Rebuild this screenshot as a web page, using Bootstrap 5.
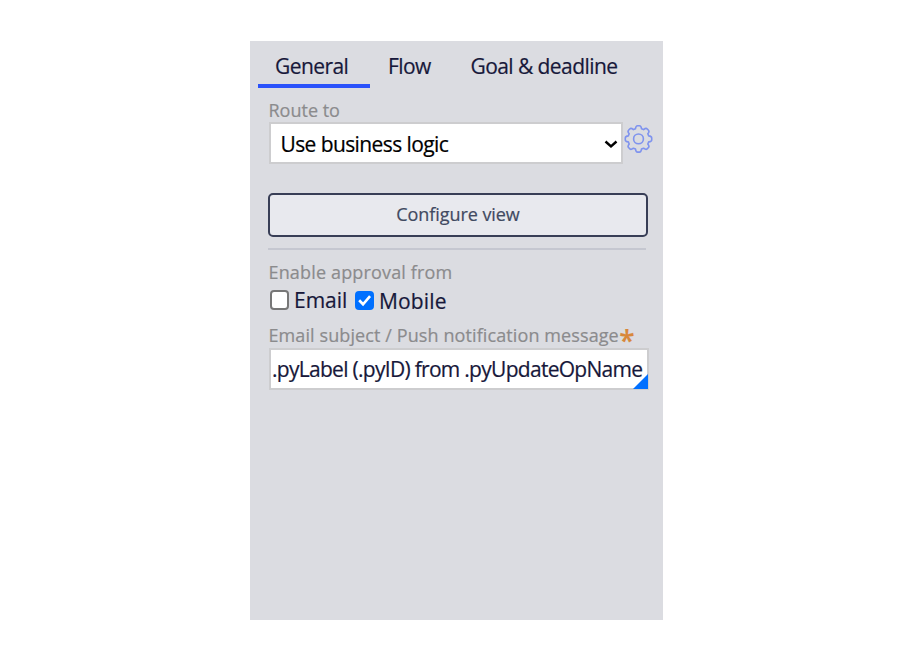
<!DOCTYPE html>
<html lang="en">
<head>
<meta charset="utf-8">
<meta name="viewport" content="width=device-width, initial-scale=1">
<title>Step properties</title>
<link href="https://cdn.jsdelivr.net/npm/bootstrap@5.3.0/dist/css/bootstrap.min.css" rel="stylesheet">
<style>
body { font-family: "Open Sans", sans-serif; background: #fff; color: #17183a; -webkit-text-stroke: .2px currentColor; }
.props { width: 413px; height: 579px; margin: 41px 0 0 250px; background: #dbdce1; }
.props-tabs { height: 47px; padding-left: 8px; }
.props-tabs .nav-link { color: #17183a; font-size: 21px; line-height: 28px; padding: 11px 0 0; height: 47px; border-bottom: 4px solid transparent; border-radius: 0; letter-spacing: -.57px; white-space: nowrap; }
.props-tabs .nav-link.active { border-bottom-color: #2a52fb; }
.tab-a { width: 112px; padding-left: 17px !important; }
.tab-b { width: 82px; padding-left: 18px !important; }
.tab-c { padding-left: 18.5px !important; }
.props-body { padding: 10px 10px 0 18px; }
.props-label { color: #8b8b8d; font-size: 18px; line-height: 24px; height: 24px; margin: 0; white-space: nowrap; padding-left: .5px; }
.route-select { width: 354px; height: 42px; flex: none; margin-left: 1px; border: 2px solid #cdcdcf; border-radius: 0; padding: 1px 20px 0 9.5px; font-size: 21px; line-height: 38px; letter-spacing: -.6px; color: #000; background-color: #fff; -webkit-text-stroke: .2px currentColor; background-image: url("data:image/svg+xml,%3Csvg xmlns='http://www.w3.org/2000/svg' viewBox='0 0 14 9'%3E%3Cpath d='M1.5 1.5l5.5 5 5.5-5' fill='none' stroke='%23000' stroke-width='2.4'/%3E%3C/svg%3E"); background-size: 14px 9px; background-position: right 3px top 16px; }
.gear { width: 29px; height: 29px; margin: 2px 0 0 1px; flex: none; }
.btn-configure { width: 380px; height: 44px; margin-top: 29px; padding: 0 0 2px; border: 2px solid #383e56; border-radius: 5px; background: #e8e9ee; color: #414961; font-size: 18px; line-height: 38px; letter-spacing: -.06px; -webkit-text-stroke: .2px currentColor; }
.divider { width: 378px; height: 2px; margin: 11px 0 10px; border: 0; background: #c5c7d0; opacity: 1; }
.approval-label { letter-spacing: .16px; }
.checks { height: 30px; font-size: 21px; line-height: 28px; padding: 2px 0 0 2px; }
.checks .form-check-input { width: 19px; height: 20px; margin: 0; flex: none; border: 2px solid #777; border-radius: 4px; background-color: #fff; }
.checks .form-check-input:checked { height: 19px; border-color: #0070ff; background-color: #0070ff; background-size: 17px 17px; background-image: url("data:image/svg+xml,%3Csvg xmlns='http://www.w3.org/2000/svg' viewBox='0 0 15 15'%3E%3Cpath d='M2.8 7.3l3.4 3.5L12.4 3.6' fill='none' stroke='%23fff' stroke-width='2.3'/%3E%3C/svg%3E"); }
.email-text { padding-left: 5px; width: 66px; }
.mobile-text { padding: 2px 0 0 5px; letter-spacing: .15px; }
.subject-label { margin-top: 9px; letter-spacing: .1px; }
.required { color: #d8873a; font-size: 28px; line-height: 24px; font-weight: 600; padding: 5px 0 0 .5px; letter-spacing: 0; }
.subject { width: 380px; height: 42px; margin: 1px 0 0 1px; }
.subject .form-control { height: 42px; border: 2px solid #cdcdcf; border-radius: 0; padding: 0 1px 1px; color: #17183a; font-size: 21px; line-height: 37px; letter-spacing: -.71px; -webkit-text-stroke: .2px currentColor; }
.corner { width: 15px; height: 15px; right: 1px; bottom: 1px; background: #0070ff; clip-path: polygon(100% 0, 100% 100%, 0 100%); }
</style>
</head>
<body>
<main class="props overflow-hidden">
  <nav class="nav props-tabs flex-nowrap">
    <a class="nav-link active tab-a" href="#">General</a>
    <a class="nav-link tab-b" href="#">Flow</a>
    <a class="nav-link tab-c" href="#">Goal &amp; deadline</a>
  </nav>
  <div class="props-body">
    <label class="props-label d-block" for="route">Route to</label>
    <div class="d-flex">
      <select id="route" class="form-select route-select"><option>Use business logic</option></select>
      <svg class="gear" viewBox="-14.5 -14.9 29 29" fill="none" stroke="#7f93ee" stroke-width="1.6" stroke-linejoin="round"><path id="gear-outline" d="M-3 -10.2Q-2.6 -13.2 -1 -13.2H1Q2.6 -13.2 3 -10.2L5.1 -9.3Q7.5 -11.2 8.6 -10L10 -8.6Q11.2 -7.5 9.3 -5.1L10.2 -3Q13.2 -2.6 13.2 -1V1Q13.2 2.6 10.2 3L9.3 5.1Q11.2 7.5 10 8.6L8.6 10Q7.5 11.2 5.1 9.3L3 10.2Q2.6 13.2 1 13.2H-1Q-2.6 13.2 -3 10.2L-5.1 9.3Q-7.5 11.2 -8.6 10L-10 8.6Q-11.2 7.5 -9.3 5.1L-10.2 3Q-13.2 2.6 -13.2 1V-1Q-13.2 -2.6 -10.2 -3L-9.3 -5.1Q-11.2 -7.5 -10 -8.6L-8.6 -10Q-7.5 -11.2 -5.1 -9.3Z"/><circle r="4.9"/></svg>
    </div>
    <button type="button" class="btn btn-configure d-block">Configure view</button>
    <hr class="divider">
    <div class="props-label approval-label">Enable approval from</div>
    <div class="checks d-flex align-items-center">
      <input id="email" class="form-check-input" type="checkbox"><label for="email" class="email-text">Email</label>
      <input id="mobile" class="form-check-input" type="checkbox" checked><label for="mobile" class="mobile-text">Mobile</label>
    </div>
    <div class="props-label subject-label d-flex">Email subject / Push notification message<span class="required">*</span></div>
    <div class="subject position-relative">
      <input class="form-control" value=".pyLabel (.pyID) from .pyUpdateOpName" aria-label="Email subject">
      <span class="corner position-absolute"></span>
    </div>
  </div>
</main>
<script src="https://cdn.jsdelivr.net/npm/bootstrap@5.3.0/dist/js/bootstrap.bundle.min.js"></script>
</body>
</html>
